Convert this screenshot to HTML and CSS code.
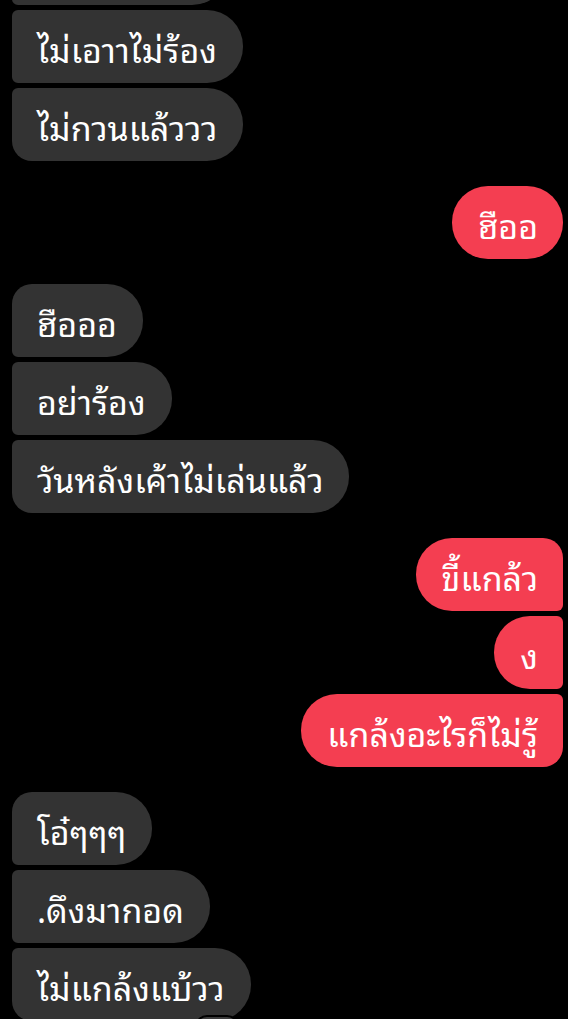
FILE: index.html
```html
<!doctype html>
<html lang="th">

<head>
  <meta charset="utf-8" />
  <meta name="viewport" content="width=device-width, initial-scale=1">
  <title>Chat</title>
  <link rel="stylesheet" href="styles.css">
</head>

<body>
  <div class="chat">
    <!-- them -->
    <div class="group them">
      <div class="msg"><span class="bubble cut"></span></div>
      <div class="msg"><span class="bubble">ไม่เอาาไม่ร้อง</span></div>
      <div class="msg"><span class="bubble">ไม่กวนแล้ววว</span></div>
    </div>

    <!-- me -->
    <div class="group me">
      <div class="msg"><span class="bubble">ฮืออ</span></div>
    </div>

    <div class="group them">
      <div class="msg"><span class="bubble">ฮือออ</span></div>
      <div class="msg"><span class="bubble">อย่าร้อง</span></div>
      <div class="msg"><span class="bubble">วันหลังเค้าไม่เล่นแล้ว</span></div>
    </div>

    <div class="group me">
      <div class="msg"><span class="bubble">ขี้แกล้ว</span></div>
      <div class="msg"><span class="bubble">ง</span></div>
      <div class="msg"><span class="bubble">แกล้งอะไรก็ไม่รู้</span></div>
    </div>

    <div class="group them">
      <div class="msg"><span class="bubble">โอ๋ๆๆๆ</span></div>
      <div class="msg"><span class="bubble">.ดึงมากอด</span></div>
      <div class="msg"><span class="bubble">ไม่แกล้งแบ้วว<span class="react"></span></span></div>
    </div>
  </div>
</body>

</html>
```

FILE: styles.css
```css
html,
body {
  margin: 0;
  height: 100%;
  background-color: #000;
  overflow: hidden;
}

.chat {
  display: flex;
  flex-direction: column;
  gap: 25px;
  padding: 0 5px 0 12px;
  margin-top: -68px;
  font-family: "Noto Sans Thai Looped", "Noto Sans Thai UI", "Loma", "Garuda", "Noto Sans Thai", "Noto Sans", sans-serif;
  font-size: 34px;
  color: #fff;
}

.group {
  display: flex;
  flex-direction: column;
  gap: 5px;
}

.msg {
  display: flex;
}

.me .msg {
  justify-content: flex-end;
}

.bubble {
  position: relative;
  display: block;
  height: 73px;
  box-sizing: border-box;
  padding: 0 26px 0 25px;
  line-height: 76px;
  white-space: nowrap;
  border-radius: 36px;
}

.bubble.cut {
  width: 216px;
}

.them .bubble {
  background-color: #333333;
  border-top-left-radius: 6px;
  border-bottom-left-radius: 6px;
}

.them .msg:first-child .bubble {
  border-top-left-radius: 20px;
}

.them .msg:last-child .bubble {
  border-bottom-left-radius: 20px;
}

.me .bubble {
  background-color: #f43e51;
  padding: 0 25px 0 26px;
  border-top-right-radius: 6px;
  border-bottom-right-radius: 6px;
}

.me .msg:first-child .bubble {
  border-top-right-radius: 20px;
}

.me .msg:last-child .bubble {
  border-bottom-right-radius: 20px;
}

.me .msg:only-child .bubble {
  border-radius: 36px;
}

.react {
  position: absolute;
  left: 183px;
  top: 67px;
  width: 40px;
  height: 24px;
  border-radius: 12px;
  background-color: #3c3c3c;
  border: 2px solid #000;
}
```
